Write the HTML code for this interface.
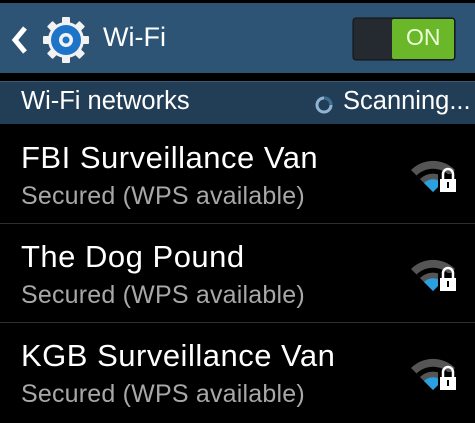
<!DOCTYPE html>
<html><head><style>
body{margin:0;width:475px;height:423px;background:#000;overflow:hidden;font-family:"Liberation Sans",sans-serif;position:relative}
.abs{position:absolute}
.hdr{left:0;top:3px;width:475px;height:70px;background:#2d5475}
.sub{left:0;top:81px;width:475px;height:42px;background:#223d56;border-top:1px solid #3a5a75}
.t1{color:#fff;font-size:31px;letter-spacing:0.5px;left:21px;white-space:nowrap}
.t2{color:#a8a8a8;font-size:25px;letter-spacing:0.2px;left:21px;white-space:nowrap}
.div{left:0;width:475px;height:1px;background:#2e2e2e}
</style></head><body>
<div class="abs hdr"></div>
<svg class="abs" style="left:0;top:0" width="475" height="80">
<path d="M25 28 L15 40 L25 52" stroke="#fff" stroke-width="5" fill="none"/>
<g transform="translate(66,40)" fill="#f2f2f2">
<circle r="18"/>
<g id="t"><rect x="-4" y="-23" width="8" height="8" rx="1"/></g>
<use href="#t" transform="rotate(45)"/><use href="#t" transform="rotate(90)"/><use href="#t" transform="rotate(135)"/><use href="#t" transform="rotate(180)"/><use href="#t" transform="rotate(225)"/><use href="#t" transform="rotate(270)"/><use href="#t" transform="rotate(315)"/>
<circle r="15" fill="#1d74c9"/><circle r="7" fill="#f2f2f2"/><circle r="3.5" fill="#1d74c9"/>
</g>
<rect x="353" y="18" width="102" height="42" rx="3" fill="#252a30" stroke="#111"/>
<rect x="392" y="19" width="62" height="40" rx="2" fill="#6ab82a"/>
</svg>
<div class="abs" style="left:103px;top:22px;color:#fff;font-size:27px">Wi-Fi</div>
<div class="abs" style="left:406px;top:24px;color:#eaffd8;font-size:23px">ON</div>
<div class="abs sub"></div>
<div class="abs" style="left:21px;top:87px;color:#fff;font-size:25.5px">Wi-Fi networks</div>
<svg class="abs" style="left:313px;top:94px" width="22" height="22"><circle cx="11" cy="11" r="7" stroke="#8fb4d4" stroke-width="3" fill="none"/><path d="M11 4 A7 7 0 0 1 18 11" stroke="#3a6b93" stroke-width="3" fill="none"/></svg>
<div class="abs" style="left:343px;top:87px;color:#fff;font-size:25.5px">Scanning...</div>

<div class="abs t1" style="top:140px">FBI Surveillance Van</div>
<div class="abs t2" style="top:182px">Secured (WPS available)</div>
<div class="abs div" style="top:223px"></div>
<div class="abs t1" style="top:239px">The Dog Pound</div>
<div class="abs t2" style="top:281px">Secured (WPS available)</div>
<div class="abs div" style="top:322px"></div>
<div class="abs t1" style="top:338px">KGB Surveillance Van</div>
<div class="abs t2" style="top:380px">Secured (WPS available)</div>

<svg class="abs" style="left:405px;top:150px" width="60" height="260">
<defs><g id="w">
<path d="M28 42 L6 20 A31 31 0 0 1 50 20 Z" fill="#555"/>
<path d="M28 42 L11.5 25.5 A23.5 23.5 0 0 1 44.5 25.5 Z" fill="#000"/>
<path d="M28 42 L15 29 A18.5 18.5 0 0 1 41 29 Z" fill="#555"/>
<path d="M28 42 L19 33 A12.7 12.7 0 0 1 37 33 Z" fill="#2aa0e0"/>
<rect x="33" y="24" width="20" height="19" fill="#000"/>
<path d="M38 29 V24 A5 5 0 0 1 48 24 V29" stroke="#fff" stroke-width="2.5" fill="none"/>
<rect x="35" y="29" width="16" height="13" fill="#fff"/>
<rect x="42" y="32" width="2" height="6" fill="#000"/>
</g></defs>
<use href="#w" y="0"/><use href="#w" y="99"/><use href="#w" y="198"/>
</svg>
</body></html>
